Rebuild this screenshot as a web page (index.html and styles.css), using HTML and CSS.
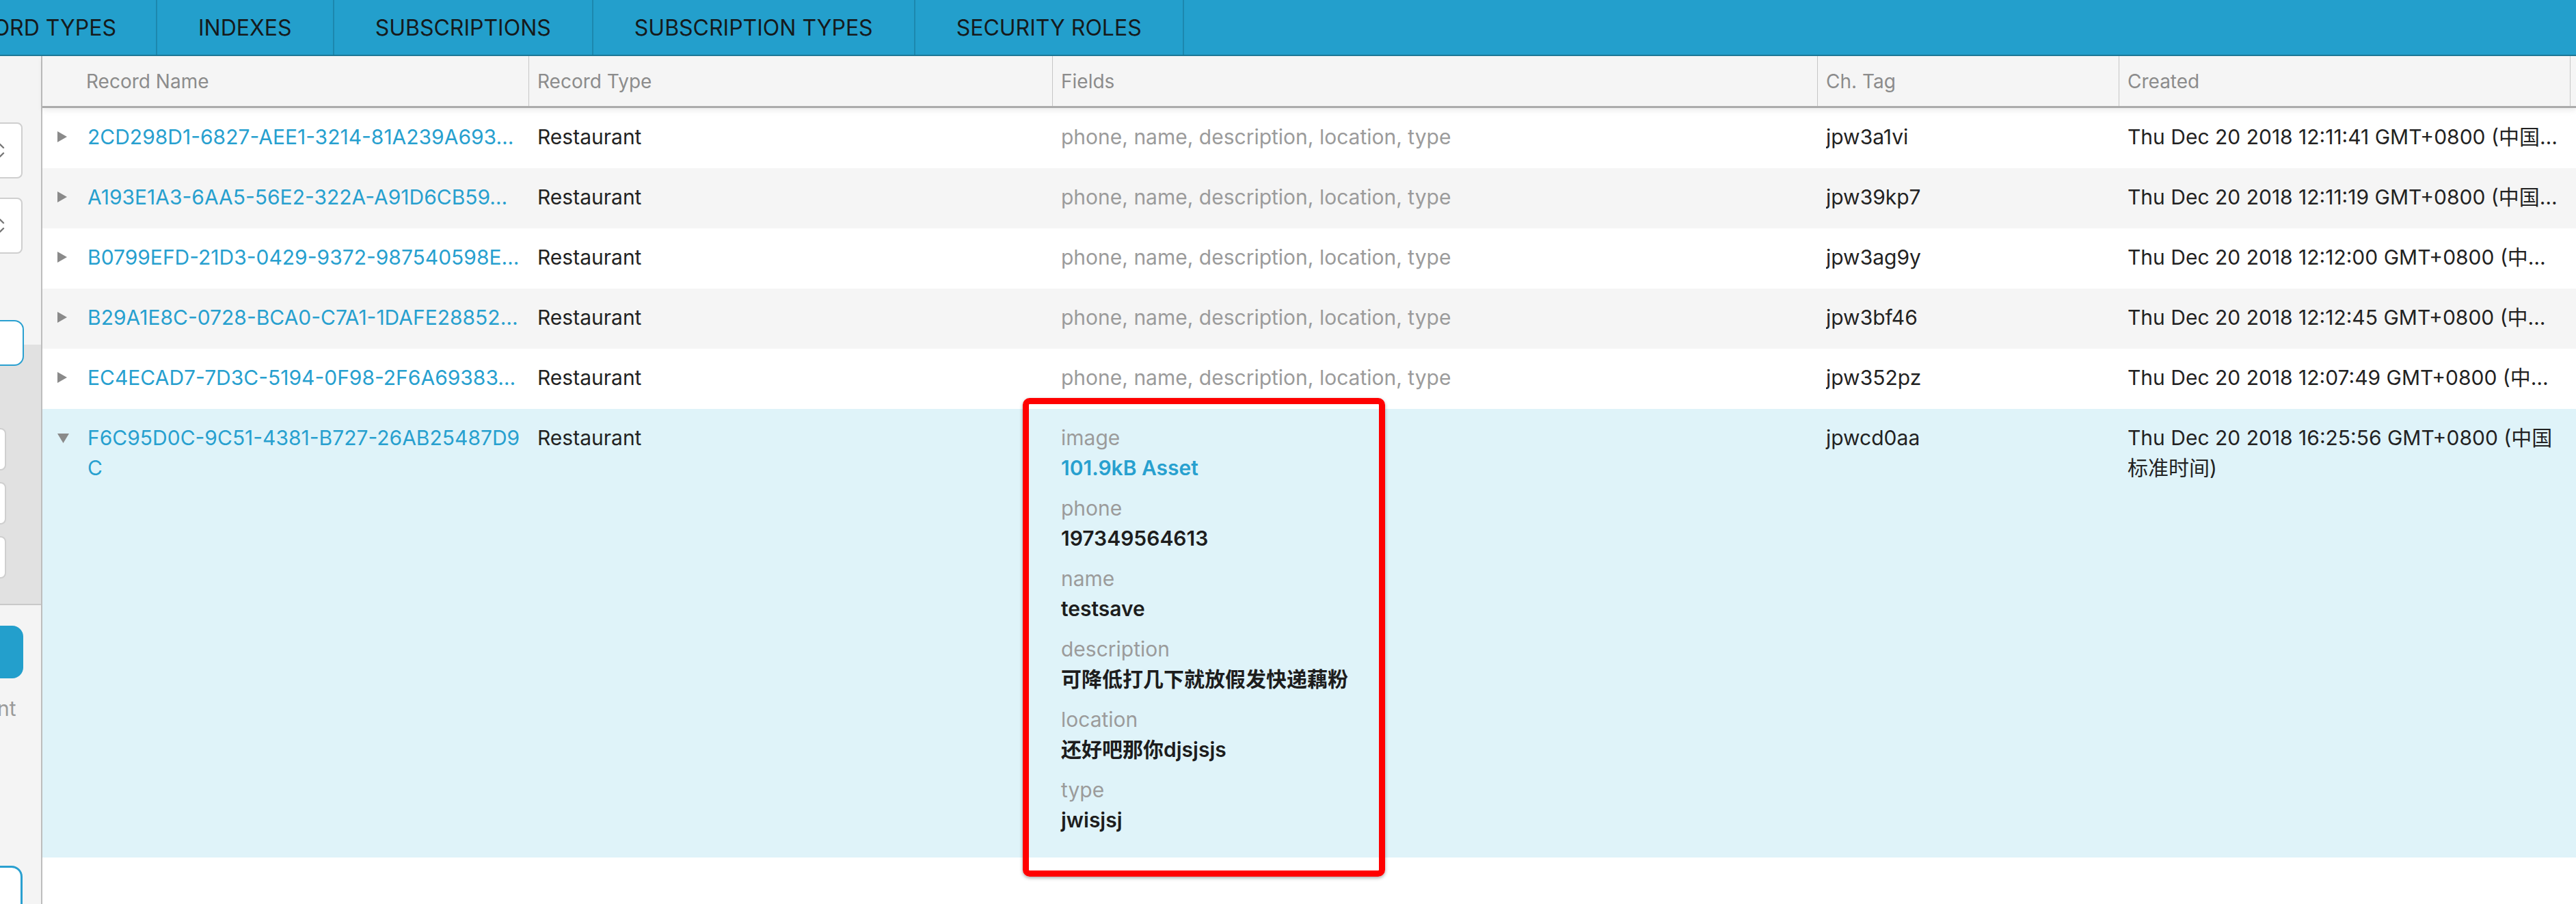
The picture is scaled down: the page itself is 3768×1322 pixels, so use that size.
FILE: index.html
```html
<!DOCTYPE html>
<html lang="en">
<head>
<meta charset="utf-8">
<title>Records</title>
<link rel="stylesheet" href="styles.css">
</head>
<body>
<div class="app">
  <nav class="tabs">
    <div class="tab tab-first">RECORD TYPES</div>
    <div class="tab">INDEXES</div>
    <div class="tab">SUBSCRIPTIONS</div>
    <div class="tab">SUBSCRIPTION TYPES</div>
    <div class="tab">SECURITY ROLES</div>
  </nav>
  <div class="main">
    <aside class="sidebar">
      <div class="side-top">
        <div class="sel">
          <svg class="chev" viewBox="0 0 14 26" width="14" height="26"><path d="M2 9 L7 4 L12 9 M2 17 L7 22 L12 17" fill="none" stroke="#777" stroke-width="2.4" stroke-linecap="round" stroke-linejoin="round"/></svg>
        </div>
        <div class="sel sel-second">
          <svg class="chev" viewBox="0 0 14 26" width="14" height="26"><path d="M2 9 L7 4 L12 9 M2 17 L7 22 L12 17" fill="none" stroke="#777" stroke-width="2.4" stroke-linecap="round" stroke-linejoin="round"/></svg>
        </div>
        <div class="search-box"></div>
      </div>
      <div class="side-gray">
        <div class="gray-input"></div>
        <div class="gray-input"></div>
        <div class="gray-input"></div>
      </div>
      <div class="side-bottom">
        <div class="blue-btn"></div>
        <div class="side-text">nt</div>
        <div class="outline-box"></div>
      </div>
    </aside>
    <section class="table">
      <div class="thead cols">
        <div class="th th-first">Record Name</div>
        <div class="th">Record Type</div>
        <div class="th">Fields</div>
        <div class="th">Ch. Tag</div>
        <div class="th">Created</div>
        <div class="th th-last"></div>
      </div>
      <div class="tbody">
        <div class="tr cols">
          <div class="td td-name"><svg class="tri" viewBox="0 0 14 16" width="14" height="16"><path d="M0 0 L14 8 L0 16 Z" fill="#8a8a8a"/></svg><span class="link clip">2CD298D1-6827-AEE1-3214-81A239A693…</span></div>
          <div class="td"><span class="clip">Restaurant</span></div>
          <div class="td muted"><span class="clip">phone, name, description, location, type</span></div>
          <div class="td"><span class="clip">jpw3a1vi</span></div>
          <div class="td"><span class="clip">Thu Dec 20 2018 12:11:41 GMT+0800 (中国…</span></div>
          <div class="td td-last"></div>
        </div>
        <div class="tr cols alt">
          <div class="td td-name"><svg class="tri" viewBox="0 0 14 16" width="14" height="16"><path d="M0 0 L14 8 L0 16 Z" fill="#8a8a8a"/></svg><span class="link clip">A193E1A3-6AA5-56E2-322A-A91D6CB59…</span></div>
          <div class="td"><span class="clip">Restaurant</span></div>
          <div class="td muted"><span class="clip">phone, name, description, location, type</span></div>
          <div class="td"><span class="clip">jpw39kp7</span></div>
          <div class="td"><span class="clip">Thu Dec 20 2018 12:11:19 GMT+0800 (中国…</span></div>
          <div class="td td-last"></div>
        </div>
        <div class="tr cols">
          <div class="td td-name"><svg class="tri" viewBox="0 0 14 16" width="14" height="16"><path d="M0 0 L14 8 L0 16 Z" fill="#8a8a8a"/></svg><span class="link clip">B0799EFD-21D3-0429-9372-987540598E…</span></div>
          <div class="td"><span class="clip">Restaurant</span></div>
          <div class="td muted"><span class="clip">phone, name, description, location, type</span></div>
          <div class="td"><span class="clip">jpw3ag9y</span></div>
          <div class="td"><span class="clip">Thu Dec 20 2018 12:12:00 GMT+0800 (中…</span></div>
          <div class="td td-last"></div>
        </div>
        <div class="tr cols alt">
          <div class="td td-name"><svg class="tri" viewBox="0 0 14 16" width="14" height="16"><path d="M0 0 L14 8 L0 16 Z" fill="#8a8a8a"/></svg><span class="link clip">B29A1E8C-0728-BCA0-C7A1-1DAFE28852…</span></div>
          <div class="td"><span class="clip">Restaurant</span></div>
          <div class="td muted"><span class="clip">phone, name, description, location, type</span></div>
          <div class="td"><span class="clip">jpw3bf46</span></div>
          <div class="td"><span class="clip">Thu Dec 20 2018 12:12:45 GMT+0800 (中…</span></div>
          <div class="td td-last"></div>
        </div>
        <div class="tr cols">
          <div class="td td-name"><svg class="tri" viewBox="0 0 14 16" width="14" height="16"><path d="M0 0 L14 8 L0 16 Z" fill="#8a8a8a"/></svg><span class="link clip">EC4ECAD7-7D3C-5194-0F98-2F6A69383…</span></div>
          <div class="td"><span class="clip">Restaurant</span></div>
          <div class="td muted"><span class="clip">phone, name, description, location, type</span></div>
          <div class="td"><span class="clip">jpw352pz</span></div>
          <div class="td"><span class="clip">Thu Dec 20 2018 12:07:49 GMT+0800 (中…</span></div>
          <div class="td td-last"></div>
        </div>
        <div class="tr cols open">
          <div class="td td-name"><svg class="tri tri-down" viewBox="0 0 17 14" width="17" height="14"><path d="M0 0 L17 0 L8.5 14 Z" fill="#8a8a8a"/></svg><span class="link wrap">F6C95D0C-9C51-4381-B727-26AB25487D9C</span></div>
          <div class="td">Restaurant</div>
          <div class="td">
            <div class="kv"><div class="kv-label">image</div><div class="kv-value link">101.9kB Asset</div></div>
            <div class="kv"><div class="kv-label">phone</div><div class="kv-value">197349564613</div></div>
            <div class="kv"><div class="kv-label">name</div><div class="kv-value">testsave</div></div>
            <div class="kv"><div class="kv-label">description</div><div class="kv-value">可降低打几下就放假发快递藕粉</div></div>
            <div class="kv"><div class="kv-label">location</div><div class="kv-value">还好吧那你djsjsjs</div></div>
            <div class="kv"><div class="kv-label">type</div><div class="kv-value">jwisjsj</div></div>
          </div>
          <div class="td">jpwcd0aa</div>
          <div class="td">Thu Dec 20 2018 16:25:56 GMT+0800 (中国标准时间)</div>
          <div class="td td-last"></div>
        </div>
      </div>
    </section>
  </div>
  <div class="annotation"></div>
</div>
</body>
</html>
```

FILE: styles.css
```css
* { box-sizing: border-box; }
html, body { margin: 0; padding: 0; }
body {
  font-family: Inter, "Noto Sans CJK SC", sans-serif;
  background: #ffffff;
  color: #222222;
  width: 3768px;
  height: 1322px;
  overflow: hidden;
}
.app { position: relative; width: 3768px; height: 1322px; }

/* top tabs */
.tabs {
  display: flex;
  height: 82px;
  background: #239fcc;
  border-bottom: 2px solid #1d7896;
}
.tab {
  display: flex;
  align-items: center;
  padding: 0 60px;
  border-right: 2px solid #1c87ae;
  font-size: 32px;
  color: #151a1c;
  white-space: nowrap;
}
.tab-first {
  width: 230px;
  justify-content: flex-end;
  padding: 0 58px 0 0;
  overflow: hidden;
}

.main { display: flex; height: 1240px; }

/* sidebar */
.sidebar {
  width: 62px;
  flex: none;
  background: #f4f4f4;
  border-right: 2px solid #bdbdbd;
  overflow: hidden;
  display: flex;
  flex-direction: column;
}
.side-top { padding-top: 97px; height: 422px; flex: none; }
.sel {
  width: 200px;
  height: 82px;
  margin-left: -167px;
  background: #ffffff;
  border: 2px solid #cfcfcf;
  border-radius: 8px;
  display: flex;
  align-items: center;
  justify-content: flex-end;
  padding-right: 24px;
}
.sel-second { margin-top: 28px; }
.search-box {
  position: relative;
  z-index: 1;
  width: 200px;
  height: 67px;
  margin-left: -165px;
  margin-top: 97px;
  background: #ffffff;
  border: 2px solid #2aa0d0;
  border-radius: 14px;
}
.side-gray {
  height: 381px;
  flex: none;
  background: #e1e1e1;
  border-bottom: 2px solid #c9c9c9;
  padding-top: 122px;
}
.gray-input {
  width: 200px;
  height: 62px;
  margin-left: -191px;
  margin-bottom: 17px;
  background: #ffffff;
  border: 2px solid #cfcfcf;
  border-radius: 8px;
}
.side-bottom { flex: 1; padding-top: 30px; }
.blue-btn {
  width: 200px;
  height: 77px;
  margin-left: -166px;
  background: #239fcc;
  border-radius: 16px;
}
.side-text {
  margin-top: 22px;
  margin-left: -4px;
  font-size: 30px;
  line-height: 44px;
  color: #9a9a9a;
}
.outline-box {
  width: 200px;
  height: 120px;
  margin-left: -167px;
  margin-top: 208px;
  border: 3px solid #2aa0d0;
  border-radius: 16px;
  background: #ffffff;
}

/* table */
.table { flex: 1; min-width: 0; }
.cols {
  display: grid;
  grid-template-columns: 711px 766px 1119px 441px 660px 1fr;
}
.thead {
  position: relative;
  z-index: 1;
  height: 76px;
  background: #f5f5f5;
  border-bottom: 3px solid #ababab;
  box-shadow: 0 4px 8px rgba(0, 0, 0, 0.07);
}
.th {
  display: flex;
  align-items: center;
  padding-left: 12px;
  border-left: 1px solid #c6c6c6;
  font-size: 28px;
  color: #8c8c8c;
  white-space: nowrap;
}
.th-first { border-left: none; padding-left: 64px; }

.tr { background: #ffffff; }
.tr.alt { background: #f5f5f5; }
.tr.open { background: #dff3f9; }
.td {
  padding: 20px 11px 24px 13px;
  font-size: 30px;
  line-height: 44px;
  color: #222222;
  min-width: 0;
}
.td-name {
  display: flex;
  align-items: flex-start;
  padding-left: 22px;
}
.td-last { padding: 0; }
.tri { flex: none; margin: 14px 30px 0 0; }
.tri-down { margin: 16px 27px 0 0; }
.clip {
  display: block;
  white-space: nowrap;
  overflow: hidden;
  text-overflow: ellipsis;
  min-width: 0;
}
.link { color: #27a0cf; }
.muted { color: #9b9b9b; }
.wrap { word-break: break-all; min-width: 0; }

.kv { margin-bottom: 15px; }
.kv:last-child { margin-bottom: 9px; }
.kv-label { color: #9b9b9b; }
.kv-value { font-weight: 600; color: #1d1d1d; }
.kv-value.link { color: #27a0cf; }

/* red annotation frame drawn over the screenshot */
.annotation {
  position: absolute;
  left: 1496px;
  top: 582px;
  width: 530px;
  height: 700px;
  border: 9px solid #ff0000;
  border-radius: 10px;
  box-shadow: 0 2px 5px rgba(0, 0, 0, 0.35);
}
```
